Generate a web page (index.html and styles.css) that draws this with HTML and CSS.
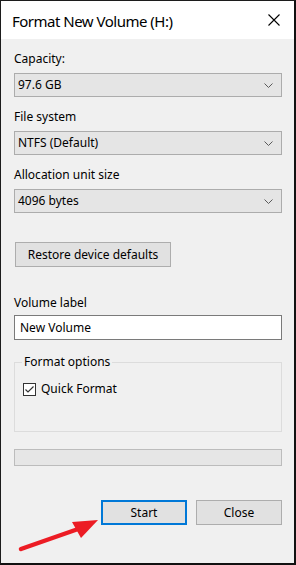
FILE: index.html
```html
<!DOCTYPE html>
<html>
<head>
<meta charset="utf-8">
<link rel="stylesheet" href="styles.css">
</head>
<body>
<div class="window">
  <div class="titlebar">
    <span class="title">Format New Volume (H:)</span>
    <svg class="close" width="12" height="12" viewBox="0 0 12 12"><path d="M0.5 0.5 L11.5 11.5 M11.5 0.5 L0.5 11.5" stroke="#000" stroke-width="1.1" fill="none"/></svg>
  </div>
  <div class="content">
    <div class="field f1">
      <div class="label">Capacity:</div>
      <div class="combo"><span>97.6 GB</span><svg class="chev" width="9" height="5" viewBox="0 0 9 5"><path d="M0.5 0.5 L4.5 4.5 L8.5 0.5" stroke="#5a5a5a" stroke-width="1" fill="none"/></svg></div>
    </div>
    <div class="field">
      <div class="label">File system</div>
      <div class="combo"><span>NTFS (Default)</span><svg class="chev" width="9" height="5" viewBox="0 0 9 5"><path d="M0.5 0.5 L4.5 4.5 L8.5 0.5" stroke="#5a5a5a" stroke-width="1" fill="none"/></svg></div>
    </div>
    <div class="field">
      <div class="label">Allocation unit size</div>
      <div class="combo"><span>4096 bytes</span><svg class="chev" width="9" height="5" viewBox="0 0 9 5"><path d="M0.5 0.5 L4.5 4.5 L8.5 0.5" stroke="#5a5a5a" stroke-width="1" fill="none"/></svg></div>
    </div>
    <div class="restore-row"><div class="btn restore">Restore device defaults</div></div>
    <div class="field vol">
      <div class="label">Volume label</div>
      <div class="textbox">New Volume</div>
    </div>
    <div class="group">
      <div class="legend">Format options</div>
      <div class="check-row">
        <span class="checkbox"><svg width="11" height="11" viewBox="0 0 11 11"><path d="M1.5 5.5 L4 8 L9.5 2.5" stroke="#333" stroke-width="1.2" fill="none"/></svg></span>
        <span>Quick Format</span>
      </div>
    </div>
    <div class="progress"></div>
    <div class="buttons">
      <div class="btn action start">Start</div>
      <div class="btn action">Close</div>
    </div>
  </div>
  <svg class="arrow" width="110" height="50" viewBox="0 0 110 50">
    <line x1="20" y1="47" x2="80" y2="26" stroke="#ec1c24" stroke-width="4.5" stroke-linecap="round"/>
    <polygon points="97,18 71,20 80,36" fill="#ec1c24"/>
  </svg>
</div>
</body>
</html>
```

FILE: styles.css
```css
* { box-sizing: border-box; }
html, body { margin: 0; padding: 0; }
body {
  width: 296px;
  height: 565px;
  overflow: hidden;
  font-family: "Noto Sans", "Open Sans", sans-serif;
  font-size: 12px;
  color: #000;
  background: #f0f0f0;
}
.window {
  position: relative;
  width: 296px;
  height: 565px;
  background: #f0f0f0;
  border-left: 1px solid #1c1c1c;
  border-top: 1px solid #1c1c1c;
  border-right: 2px solid #111;
  border-bottom: 2px solid #111;
}
.titlebar {
  height: 38px;
  background: #fff;
  display: flex;
  align-items: center;
  justify-content: space-between;
  padding: 0 14px 0 11px;
}
.title {
  font-size: 15px;
  letter-spacing: -0.5px;
  color: #000;
  margin-top: 1px;
}
.close { margin-top: 0; }
.content {
  padding: 0 12px 0 13px;
  display: flex;
  flex-direction: column;
}
.field { display: flex; flex-direction: column; margin-top: 12px; }
.field.f1 { margin-top: 12px; }
.label { line-height: 16px; height: 16px; margin-bottom: 6px; }
.combo {
  height: 24px;
  background: #e5e5e5;
  border: 1px solid #acacac;
  display: flex;
  align-items: center;
  justify-content: space-between;
  padding: 0 8px 0 3px;
  line-height: 16px;
}
.chev { margin-top: 1px; }
.restore-row { display: flex; margin-top: 29px; padding-left: 1px; }
.btn {
  background: #e1e1e1;
  border: 1px solid #adadad;
  display: flex;
  align-items: center;
  justify-content: center;
  height: 25px;
  line-height: 16px;
}
.restore { width: 156px; }
.field.vol { margin-top: 28px; }
.field.vol .label { margin-bottom: 4px; }
.textbox {
  height: 25px;
  background: #fff;
  border: 1px solid #7a7a7a;
  padding: 0 5px;
  display: flex;
  align-items: center;
  line-height: 16px;
}
.group {
  position: relative;
  margin-top: 22px;
  height: 70px;
  border: 1px solid #dcdcdc;
  padding: 18px 0 0 8px;
}
.legend {
  position: absolute;
  top: -9px;
  left: 7px;
  padding: 0 2px;
  background: #f0f0f0;
  line-height: 16px;
}
.check-row { display: flex; align-items: center; gap: 5px; line-height: 16px; }
.checkbox {
  width: 13px;
  height: 13px;
  border: 1px solid #333;
  background: #fff;
  display: flex;
  align-items: center;
  justify-content: center;
}
.progress {
  margin-top: 17px;
  height: 17px;
  border: 1px solid #bcbcbc;
  background: #e6e6e6;
}
.buttons {
  display: flex;
  justify-content: flex-end;
  gap: 9px;
  margin-top: 34px;
}
.btn.action { width: 86px; }
.btn.start { border: 2px solid #0078d7; }
.arrow {
  position: absolute;
  left: 0;
  top: 501px;
}
```
